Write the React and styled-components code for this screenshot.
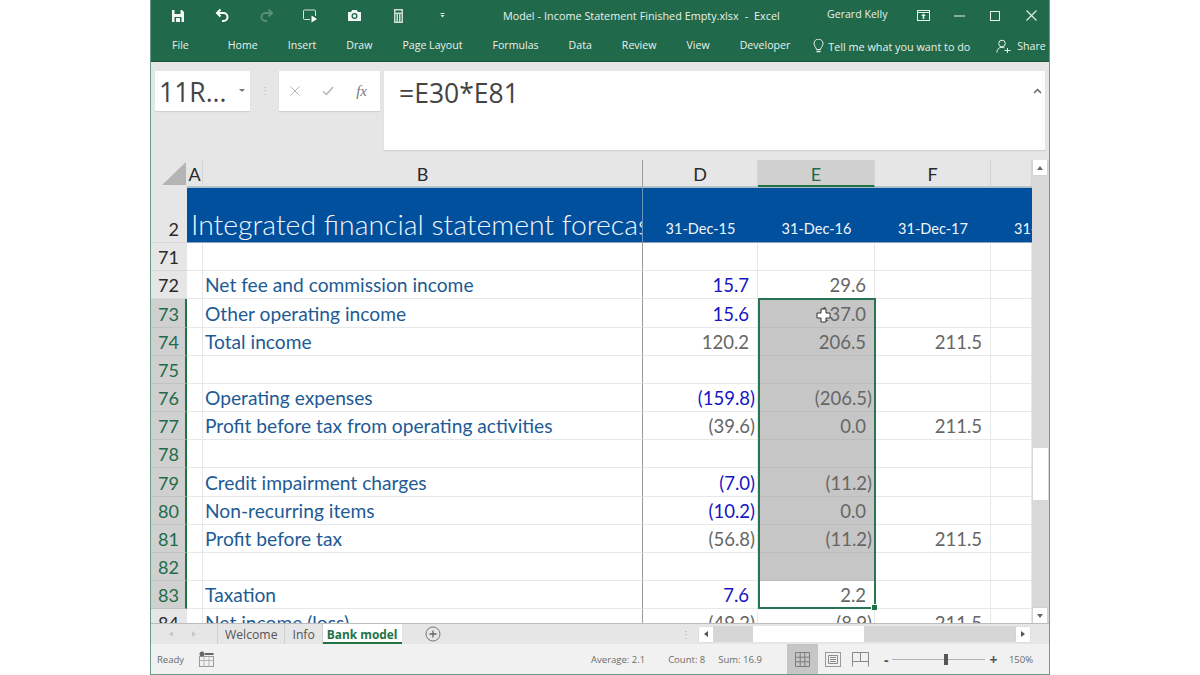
import React from 'react';
import styled, { createGlobalStyle } from 'styled-components';

const GlobalStyle = createGlobalStyle`
  html, body {
    margin: 0;
    padding: 0;
    background: #fff;
  }
  * {
    box-sizing: border-box;
  }
`;

const UI_FONT = `"Open Sans", "Noto Sans", sans-serif`;
const SHEET_FONT = `Lato, "Open Sans", sans-serif`;
const ROW_H = 28.18;
const GRID_COLS = '36px 16px 440px 115px 117px 116px 41px';

const Page = styled.div`
  width: 1200px;
  height: 675px;
  display: flex;
  justify-content: center;
  overflow: hidden;
`;

const Window = styled.div`
  width: 900px;
  height: 675px;
  display: flex;
  flex-direction: column;
  background: #e6e6e6;
  border-left: 1px solid #6f9a86;
  border-right: 1px solid #6f9a86;
  border-bottom: 1px solid #6f9a86;
`;

const GreenHeader = styled.div`
  height: 62px;
  flex: none;
  background: #20694a;
  border-bottom: 1px solid #185539;
  color: #e9f1ed;
  font-family: ${UI_FONT};
`;

const TitleBar = styled.div`
  height: 31px;
  display: flex;
  align-items: center;
  padding-left: 5px;
`;

const QuickButton = styled.div`
  width: 44px;
  height: 31px;
  display: flex;
  align-items: center;
  justify-content: center;
  opacity: ${p => p.$dim ? 0.25 : 1};
`;

const DocTitle = styled.div`
  margin: -1px 0 0 39px;
  width: 302px;
  font-size: 10.8px;
  white-space: nowrap;
  word-spacing: 0.2px;
`;

const UserName = styled.div`
  margin-left: 22px;
  width: 78px;
  font-size: 10.6px;
  margin-top: -4px;
`;

const WindowButton = styled.div`
  width: 36px;
  height: 28px;
  display: flex;
  align-items: center;
  justify-content: center;
`;

const TabBar = styled.div`
  height: 28px;
  display: flex;
  align-items: center;
  padding-left: 21px;
  font-size: 10.6px;
  gap: 30px;
`;

const FileTab = styled.span`
  margin-right: 9px;
`;

const TellMe = styled.div`
  display: flex;
  align-items: center;
  gap: 4px;
  margin-left: -7px;
  margin-top: 2px;
  white-space: nowrap;
  font-size: 10.8px;
`;

const ShareBox = styled.div`
  display: flex;
  align-items: center;
  gap: 6px;
  margin-left: -4px;
  margin-top: 2px;
`;

const FormulaArea = styled.div`
  height: 98px;
  flex: none;
  display: flex;
  align-items: flex-start;
  padding: 9px 4px 0 4px;
`;

const NameBox = styled.div`
  width: 95px;
  height: 40px;
  background: #fff;
  box-shadow: 0 1px 1px #d0d0d0;
  display: flex;
  align-items: center;
  padding: 1px 0 0 4px;
  font-family: ${UI_FONT};
  font-size: 26.5px;
  color: #444;
  position: relative;
`;

const Caret = styled.span`
  position: absolute;
  right: 5px;
  top: 18px;
  width: 0;
  height: 0;
  border-left: 3px solid transparent;
  border-right: 3px solid transparent;
  border-top: 3px solid #777;
`;

const Grip = styled.div`
  width: 29px;
  height: 40px;
  display: flex;
  align-items: center;
  justify-content: center;
  color: #b5b5b5;
  font-size: 10px;
  font-family: ${UI_FONT};
  padding-bottom: 3px;
`;

const FormulaIcons = styled.div`
  width: 101px;
  height: 40px;
  background: #fff;
  box-shadow: 0 1px 1px #d0d0d0;
  display: flex;
  align-items: center;
  justify-content: space-between;
  padding: 0 13px 0 11px;
  color: #b5b5b5;
`;

const FxLabel = styled.span`
  font-family: "Liberation Serif", serif;
  font-style: italic;
  font-size: 15px;
  color: #777;
`;

const FormulaInput = styled.div`
  margin-left: 4px;
  width: 661px;
  height: 79px;
  background: #fff;
  box-shadow: 0 1px 1px #d0d0d0;
  padding: 4px 0 0 15px;
  font-family: ${UI_FONT};
  font-size: 26.5px;
  color: #444;
  position: relative;
`;

const Collapse = styled.span`
  position: absolute;
  right: 3px;
  top: 17px;
  display: flex;
`;

const Sheet = styled.div`
  height: 464px;
  flex: none;
  display: flex;
  overflow: hidden;
  border-bottom: 1px solid #bcbcbc;
`;

const SheetBody = styled.div`
  width: 881px;
  position: relative;
  overflow: hidden;
  background: #fff;
`;

const GridRow = styled.div`
  display: grid;
  grid-template-columns: ${GRID_COLS};
  height: ${p => p.$h}px;
`;

const ColHead = styled.div`
  background: ${p => p.$active ? '#d0d0d0' : '#e6e6e6'};
  color: ${p => p.$active ? '#1f6b4a' : '#2a2a2a'};
  border-right: 1px solid #d4d4d4;
  border-bottom: ${p => p.$active ? '2px solid #217346' : '1px solid #b9c4c9'};
  font-family: ${SHEET_FONT};
  font-size: 18px;
  display: flex;
  align-items: center;
  justify-content: center;
  padding-top: 2px;
  ${p => p.$frozen && 'border-left: 1px solid #9a9a9a; margin-left: -1px;'}
`;

const Corner = styled.div`
  background: #e6e6e6;
  position: relative;
  &::after {
    content: '';
    position: absolute;
    left: 11px;
    top: 2px;
    width: 24px;
    height: 23px;
    background: #b4b4b4;
    clip-path: polygon(100% 0, 100% 100%, 0 100%);
  }
`;

const RowHead = styled.div`
  background: ${p => p.$active ? '#d0d0d0' : '#e6e6e6'};
  color: ${p => p.$active ? '#1f6b4a' : '#2a2a2a'};
  border-right: ${p => p.$active ? '2px solid #217346' : 'none'};
  border-bottom: 1px solid ${p => p.$active ? '#c2c2c2' : '#d8d8d8'};
  font-family: ${SHEET_FONT};
  font-size: 18px;
  display: flex;
  align-items: flex-end;
  justify-content: flex-end;
  padding: 0 ${p => p.$active ? '6px' : '8px'} 1px 0;
  line-height: 24px;
`;

const TitleBand = styled.div`
  grid-column: span 2;
  background: #01509d;
  color: #f1f6fb;
  font-family: ${SHEET_FONT};
  font-size: 28.4px;
  font-weight: 300;
  white-space: nowrap;
  overflow: hidden;
  display: flex;
  align-items: flex-end;
  padding-left: 4px;
  line-height: 36px;
  border-bottom: 1px solid #8aa2ba;
  border-top: 1px solid #a9bccb;
`;

const DateCell = styled.div`
  background: #01509d;
  color: #f1f6fb;
  font-family: ${SHEET_FONT};
  font-size: 14.5px;
  white-space: nowrap;
  overflow: hidden;
  display: flex;
  align-items: flex-end;
  justify-content: ${p => p.$left ? 'flex-start' : 'center'};
  padding-bottom: 5px;
  padding-left: ${p => p.$left ? '23px' : '0'};
  border-bottom: 1px solid #8aa2ba;
  border-top: 1px solid #a9bccb;
  ${p => p.$frozen && 'border-left: 1px solid #6f93b8; margin-left: -1px;'}
`;

const Cell = styled.div`
  background: ${p => p.$selected ? '#c6c6c6' : '#fff'};
  border-right: 1px solid ${p => p.$selected ? '#bebebe' : '#e8e8e8'};
  border-bottom: 1px solid ${p => p.$selected ? '#bcbcbc' : '#e8e8e8'};
  font-family: ${SHEET_FONT};
  font-size: 18.5px;
  color: ${p => p.$blue ? '#1616c4' : '#666'};
  display: flex;
  align-items: flex-end;
  justify-content: flex-end;
  white-space: nowrap;
  line-height: 25px;
  padding-right: ${p => p.$paren ? '2px' : '8px'};
  ${p => p.$frozen && 'border-left: 1px solid #9a9a9a; margin-left: -1px;'}
`;

const LabelCell = styled.div`
  background: #fff;
  border-bottom: 1px solid #e8e8e8;
  font-family: ${SHEET_FONT};
  font-size: 19.2px;
  color: #1e5a94;
  display: flex;
  align-items: flex-end;
  white-space: nowrap;
  line-height: 25px;
  padding: 0 0 1px 2px;
`;

const SpacerCell = styled.div`
  background: #fff;
  border-right: 1px solid #e8e8e8;
  border-bottom: 1px solid #e8e8e8;
`;

const Selection = styled.div`
  position: absolute;
  left: 607px;
  top: 138px;
  width: 118px;
  height: 311px;
  border: 2px solid #2b7453;
  pointer-events: none;
  &::after {
    content: '';
    position: absolute;
    right: -3px;
    bottom: -3px;
    width: 5px;
    height: 5px;
    background: #217346;
    border: 1px solid #fff;
    border-width: 1px 0 0 1px;
  }
`;

const CursorMark = styled.svg`
  position: absolute;
  left: 665px;
  top: 148px;
`;

const VScroll = styled.div`
  width: 17px;
  background: #d8d8d8;
  display: flex;
  flex-direction: column;
  padding: 0 1px;
`;

const ScrollBtn = styled.div`
  width: 14px;
  height: 15px;
  flex: none;
  background: #fff;
  box-shadow: 0 0 1px #bbb;
  display: flex;
  align-items: center;
  justify-content: center;
`;

const VTrack = styled.div`
  flex: 1;
  padding-top: 273px;
`;

const VThumb = styled.div`
  height: 52px;
  background: #fff;
`;

const TabsRow = styled.div`
  height: 20px;
  flex: none;
  display: flex;
  align-items: stretch;
  font-family: ${UI_FONT};
  font-size: 12.2px;
  color: #555;
`;

const TabNav = styled.div`
  width: 67px;
  display: flex;
  align-items: center;
  justify-content: space-around;
  padding: 0 12px 0 8px;
  border-right: 1px solid #cfcfcf;
`;

const SheetTab = styled.div`
  display: flex;
  align-items: center;
  padding: 0 7px;
  border-right: 1px solid #cfcfcf;
`;

const ActiveTab = styled.div`
  display: flex;
  align-items: center;
  padding: 1px 5px 0 4px;
  background: #fff;
  color: #217346;
  font-weight: 700;
  font-size: 11.9px;
  border-bottom: 2px solid #217346;
`;

const AddSheet = styled.div`
  margin-left: 23px;
  display: flex;
  align-items: center;
`;

const TabGrip = styled.div`
  margin-left: 239px;
  width: 11px;
  display: flex;
  align-items: center;
  justify-content: center;
  color: #aaa;
  font-size: 10px;
`;

const HScroll = styled.div`
  flex: 1;
  margin-left: 8px;
  display: flex;
  align-items: center;
  padding-right: 19px;
`;

const HTrack = styled.div`
  flex: 1;
  height: 16px;
  background: #d6d6d6;
  padding-left: 40px;
`;

const HThumb = styled.div`
  width: 111px;
  height: 16px;
  background: #fff;
`;

const StatusBar = styled.div`
  flex: 1;
  display: flex;
  align-items: center;
  background: #f1f1f1;
  font-family: ${UI_FONT};
  font-size: 9.5px;
  color: #6b6b6b;
  padding-left: 6px;
`;

const MacroIcon = styled.div`
  margin-left: 15px;
  display: flex;
`;

const StatusText = styled.span`
  margin-left: ${p => p.$gap}px;
  white-space: nowrap;
`;

const ViewButton = styled.div`
  width: ${p => p.$w || 31}px;
  align-self: stretch;
  display: flex;
  align-items: center;
  justify-content: center;
  background: ${p => p.$active ? '#c6c6c6' : 'transparent'};
  margin-left: ${p => p.$gap || 0}px;
`;

const ZoomControl = styled.div`
  margin-left: 11px;
  width: 118px;
  display: flex;
  align-items: center;
  gap: 4px;
  font-size: 14px;
  font-weight: 700;
  color: #555;
`;

const SliderTrack = styled.div`
  width: 93px;
  height: 1px;
  background: #b0b0b0;
  position: relative;
`;

const SliderThumb = styled.div`
  position: absolute;
  left: 52px;
  top: -5px;
  width: 4px;
  height: 11px;
  background: #555;
`;

const rows = [
  { n: 71 },
  { n: 72, label: 'Net fee and commission income', d: '15.7', dBlue: true, e: '29.6' },
  { n: 73, label: 'Other operating income', d: '15.6', dBlue: true, e: '137.0' },
  { n: 74, label: 'Total income', d: '120.2', e: '206.5', f: '211.5' },
  { n: 75 },
  { n: 76, label: 'Operating expenses', d: '(159.8)', dBlue: true, e: '(206.5)' },
  { n: 77, label: 'Profit before tax from operating activities', d: '(39.6)', e: '0.0', f: '211.5' },
  { n: 78 },
  { n: 79, label: 'Credit impairment charges', d: '(7.0)', dBlue: true, e: '(11.2)' },
  { n: 80, label: 'Non-recurring items', d: '(10.2)', dBlue: true, e: '0.0' },
  { n: 81, label: 'Profit before tax', d: '(56.8)', e: '(11.2)', f: '211.5' },
  { n: 82 },
  { n: 83, label: 'Taxation', d: '7.6', dBlue: true, e: '2.2' },
  { n: 84, label: 'Net income (loss)', d: '(49.2)', e: '(8.9)', f: '211.5' },
];

const isParen = v => !!v && v.startsWith('(');

const SaveIcon = () => (
  <svg width="14" height="14" viewBox="0 0 14 14">
    <path d="M1 1h10l2 2v10H1z" fill="#f2f6f4" />
    <rect x="3.5" y="1" width="6" height="4" fill="#20694a" />
    <rect x="3.5" y="8" width="7" height="5" fill="#20694a" />
    <rect x="5" y="9" width="4" height="4" fill="#f2f6f4" />
  </svg>
);

const UndoIcon = ({ flip }) => (
  <svg width="15" height="15" viewBox="0 0 15 15" style={flip ? { transform: 'scaleX(-1)' } : undefined}>
    <path d="M5.5 1.5 2 5l3.5 3.5" fill="none" stroke="#fff" strokeWidth="2" />
    <path d="M2.5 5H8.5a4 4 0 0 1 0 8H7" fill="none" stroke="#fff" strokeWidth="2" />
  </svg>
);

const SlideIcon = () => (
  <svg width="16" height="14" viewBox="0 0 16 14">
    <path d="M8 10.5H2.5a1 1 0 0 1-1-1V2a1 1 0 0 1 1-1h10a1 1 0 0 1 1 1v5" fill="none" stroke="#d8e6df" strokeWidth="1" />
    <path d="M9.5 6.5 15 10l-5.5 3.5z" fill="#fff" />
  </svg>
);

const CameraIcon = () => (
  <svg width="15" height="13" viewBox="0 0 15 13">
    <path d="M1 3h3l1.2-2h4.6L11 3h3v9H1z" fill="#f2f6f4" />
    <circle cx="7.5" cy="7" r="3" fill="#20694a" />
    <circle cx="7.5" cy="7" r="1.7" fill="#f2f6f4" />
  </svg>
);

const CalcIcon = () => (
  <svg width="9" height="14" viewBox="0 0 9 14">
    <rect x="0" y="0" width="9" height="14" fill="#cfdcd5" />
    <rect x="1.5" y="1.5" width="6" height="2" fill="#20694a" />
    <path d="M2 5v7.5M4.5 5v7.5M7 5v7.5" stroke="#20694a" strokeWidth="1" />
  </svg>
);

const MoreIcon = () => (
  <svg width="5" height="5" viewBox="0 0 5 5">
    <rect x="0.5" y="0" width="4" height="1" fill="#dfe9e4" />
    <path d="M0.5 2h4L2.5 4.5z" fill="#dfe9e4" />
  </svg>
);

const RibbonDisplayIcon = () => (
  <svg width="13" height="11" viewBox="0 0 13 11">
    <rect x="0.5" y="0.5" width="12" height="10" fill="none" stroke="#e9f1ed" />
    <path d="M1 2.5h11" stroke="#e9f1ed" />
    <path d="M6.5 3.5 4 6h1.7v3h1.6V6H9z" fill="#e9f1ed" />
  </svg>
);

const MinimizeIcon = () => (
  <svg width="11" height="2" viewBox="0 0 11 2"><path d="M0 1h11" stroke="#e9f1ed" /></svg>
);

const MaximizeIcon = () => (
  <svg width="10" height="10" viewBox="0 0 10 10"><rect x="0.5" y="0.5" width="9" height="9" fill="none" stroke="#e9f1ed" /></svg>
);

const CloseIcon = ({ size = 11, color = '#e9f1ed' }) => (
  <svg width={size} height={size} viewBox="0 0 11 11"><path d="M0.5 0.5l10 10M10.5 0.5l-10 10" stroke={color} strokeWidth="1.1" /></svg>
);

const BulbIcon = () => (
  <svg width="11" height="15" viewBox="0 0 11 15">
    <path d="M3.5 10.5C3 8 1 7 1 4.6a4.5 4.5 0 0 1 9 0C10 7 8 8 7.5 10.5z" fill="none" stroke="#e9f1ed" />
    <path d="M3.5 12.5h4" stroke="#e9f1ed" strokeWidth="1.5" />
  </svg>
);

const PersonIcon = () => (
  <svg width="15" height="15" viewBox="0 0 15 15">
    <circle cx="6" cy="4.5" r="3.3" fill="none" stroke="#e9f1ed" />
    <path d="M0.8 13.5C1.2 10 3 8.3 6 8.3c1 0 1.8.2 2.5.6" fill="none" stroke="#e9f1ed" />
    <path d="M8.5 11.5h6M11.5 9v5" stroke="#e9f1ed" />
  </svg>
);

const CheckIcon = () => (
  <svg width="12" height="10" viewBox="0 0 12 10"><path d="M1 5.5l3.5 3L11 1" fill="none" stroke="#b5b5b5" strokeWidth="1.5" /></svg>
);

const ChevronUp = () => (
  <svg width="9" height="6" viewBox="0 0 9 6"><path d="M1 5l3.5-3.5L8 5" fill="none" stroke="#666" strokeWidth="1.5" /></svg>
);

const Arrow = ({ dir, color = '#666', size = 6 }) => {
  const pts = {
    up: '0,5 3,1 6,5',
    down: '0,1 3,5 6,1',
    left: '5,0 1,3 5,6',
    right: '1,0 5,3 1,6',
  };
  return (
    <svg width={size} height={size} viewBox="0 0 6 6"><polygon points={pts[dir]} fill={color} /></svg>
  );
};

const PlusCircle = () => (
  <svg width="16" height="16" viewBox="0 0 16 16">
    <circle cx="8" cy="8" r="7" fill="none" stroke="#777" />
    <path d="M8 4.5v7M4.5 8h7" stroke="#666" strokeWidth="1.3" />
  </svg>
);

const MacroGlyph = () => (
  <svg width="15" height="16" viewBox="0 0 15 16">
    <rect x="0.5" y="5.5" width="14" height="10" fill="none" stroke="#9a9a9a" />
    <path d="M5 5.5v10M10 5.5v10M0.5 9.5h14" stroke="#b5b5b5" />
    <circle cx="3" cy="3" r="2.5" fill="#666" />
    <rect x="6" y="2" width="8.5" height="2" fill="#666" />
  </svg>
);

const NormalViewIcon = () => (
  <svg width="15" height="15" viewBox="0 0 15 15">
    <path d="M.5.5h14v14H.5zM5.2.5v14M9.8.5v14M.5 5.2h14M.5 9.8h14" fill="none" stroke="#7d7d7d" />
  </svg>
);

const PageViewIcon = () => (
  <svg width="16" height="15" viewBox="0 0 16 15">
    <rect x="0.5" y="0.5" width="15" height="14" fill="none" stroke="#999" />
    <path d="M3.5 3.5h9v8h-9zM5 5.5h6M5 7.5h6M5 9.5h6" fill="none" stroke="#8a8a8a" />
  </svg>
);

const BreakViewIcon = () => (
  <svg width="17" height="15" viewBox="0 0 17 15">
    <path d="M.5 14.5V.5h16v14M.5 9.5h16M8.5.5v9" fill="none" stroke="#888" />
  </svg>
);

export default function App() {
  return (
    <Page>
      <GlobalStyle />
      <Window>
        <GreenHeader>
          <TitleBar>
            <QuickButton><SaveIcon /></QuickButton>
            <QuickButton><UndoIcon /></QuickButton>
            <QuickButton $dim><UndoIcon flip /></QuickButton>
            <QuickButton><SlideIcon /></QuickButton>
            <QuickButton><CameraIcon /></QuickButton>
            <QuickButton><CalcIcon /></QuickButton>
            <QuickButton><MoreIcon /></QuickButton>
            <DocTitle>Model - Income Statement Finished Empty.xlsx&nbsp; -&nbsp; Excel</DocTitle>
            <UserName>Gerard Kelly</UserName>
            <WindowButton><RibbonDisplayIcon /></WindowButton>
            <WindowButton><MinimizeIcon /></WindowButton>
            <WindowButton><MaximizeIcon /></WindowButton>
            <WindowButton><CloseIcon /></WindowButton>
          </TitleBar>
          <TabBar>
            <FileTab>File</FileTab>
            <span>Home</span>
            <span>Insert</span>
            <span>Draw</span>
            <span>Page Layout</span>
            <span>Formulas</span>
            <span>Data</span>
            <span>Review</span>
            <span>View</span>
            <span>Developer</span>
            <TellMe><BulbIcon />Tell me what you want to do</TellMe>
            <ShareBox><PersonIcon />Share</ShareBox>
          </TabBar>
        </GreenHeader>

        <FormulaArea>
          <NameBox>11R...<Caret /></NameBox>
          <Grip>⋮</Grip>
          <FormulaIcons>
            <CloseIcon size={10} color="#b5b5b5" />
            <CheckIcon />
            <FxLabel>fx</FxLabel>
          </FormulaIcons>
          <FormulaInput>
            =E30*E81
            <Collapse><ChevronUp /></Collapse>
          </FormulaInput>
        </FormulaArea>

        <Sheet>
          <SheetBody>
            <GridRow $h={27}>
              <Corner />
              <ColHead>A</ColHead>
              <ColHead>B</ColHead>
              <ColHead $frozen>D</ColHead>
              <ColHead $active>E</ColHead>
              <ColHead>F</ColHead>
              <ColHead />
            </GridRow>
            <GridRow $h={56}>
              <RowHead>2</RowHead>
              <TitleBand>Integrated financial statement forecast</TitleBand>
              <DateCell $frozen>31-Dec-15</DateCell>
              <DateCell>31-Dec-16</DateCell>
              <DateCell>31-Dec-17</DateCell>
              <DateCell $left>31-Dec-18</DateCell>
            </GridRow>
            {rows.map(r => {
              const selected = r.n >= 73 && r.n <= 82;
              return (
                <GridRow key={r.n} $h={ROW_H}>
                  <RowHead $active={r.n >= 73 && r.n <= 83}>{r.n}</RowHead>
                  <SpacerCell />
                  <LabelCell>{r.label}</LabelCell>
                  <Cell $frozen $blue={r.dBlue} $paren={isParen(r.d)}>{r.d}</Cell>
                  <Cell $selected={selected} $paren={isParen(r.e)}>{r.e}</Cell>
                  <Cell>{r.f}</Cell>
                  <Cell />
                </GridRow>
              );
            })}
            <Selection />
            <CursorMark width="15" height="15" viewBox="0 0 15 15">
              <path d="M5 1h5v4h4v5h-4v4H5v-4H1V5h4z" fill="#fff" stroke="#333" strokeWidth="1" />
            </CursorMark>
          </SheetBody>
          <VScroll>
            <ScrollBtn><Arrow dir="up" /></ScrollBtn>
            <VTrack><VThumb /></VTrack>
            <ScrollBtn><Arrow dir="down" /></ScrollBtn>
          </VScroll>
        </Sheet>

        <TabsRow>
          <TabNav>
            <Arrow dir="left" color="#c8c8c8" />
            <Arrow dir="right" color="#c8c8c8" />
          </TabNav>
          <SheetTab>Welcome</SheetTab>
          <SheetTab>Info</SheetTab>
          <ActiveTab>Bank model</ActiveTab>
          <AddSheet><PlusCircle /></AddSheet>
          <TabGrip>⋮</TabGrip>
          <HScroll>
            <ScrollBtn><Arrow dir="left" color="#555" /></ScrollBtn>
            <HTrack><HThumb /></HTrack>
            <ScrollBtn><Arrow dir="right" color="#555" /></ScrollBtn>
          </HScroll>
        </TabsRow>

        <StatusBar>
          <span>Ready</span>
          <MacroIcon><MacroGlyph /></MacroIcon>
          <StatusText $gap={377}>Average: 2.1</StatusText>
          <StatusText $gap={23}>Count: 8</StatusText>
          <StatusText $gap={13}>Sum: 16.9</StatusText>
          <ViewButton $active $gap={25}><NormalViewIcon /></ViewButton>
          <ViewButton><PageViewIcon /></ViewButton>
          <ViewButton $w={24}><BreakViewIcon /></ViewButton>
          <ZoomControl>
            <span>-</span>
            <SliderTrack><SliderThumb /></SliderTrack>
            <span>+</span>
          </ZoomControl>
          <StatusText $gap={7}>150%</StatusText>
        </StatusBar>
      </Window>
    </Page>
  );
}
